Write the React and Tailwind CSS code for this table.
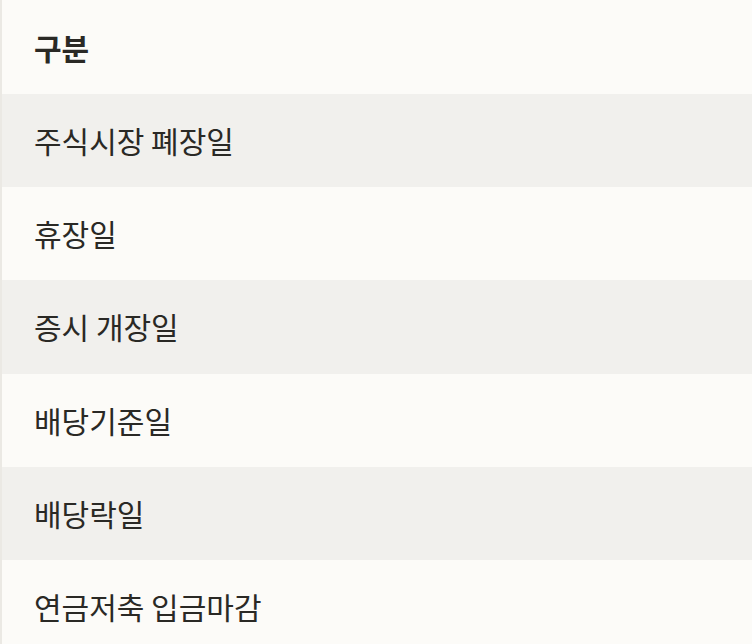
export default function App() {
  const rows = [
    "주식시장 폐장일",
    "휴장일",
    "증시 개장일",
    "배당기준일",
    "배당락일",
    "연금저축 입금마감",
  ];
  return (
    <div
      className="w-[752px] h-[644px] overflow-hidden bg-[#fcfbf8] border-l-2 border-[#ebe9e4] text-[#2a2925]"
      style={{ fontFamily: '"Noto Sans CJK KR", "Noto Sans", sans-serif' }}
    >
      <div className="h-[94px] flex items-center px-[32px] text-[30px] font-bold bg-[#fcfbf8]">
        구분
      </div>
      {rows.map((r, i) => (
        <div
          key={r}
          className={
            "h-[93.2px] flex items-center px-[32px] text-[30px] " +
            (i % 2 === 0 ? "bg-[#f1f0ed]" : "bg-[#fcfbf8]")
          }
        >
          {r}
        </div>
      ))}
    </div>
  );
}
